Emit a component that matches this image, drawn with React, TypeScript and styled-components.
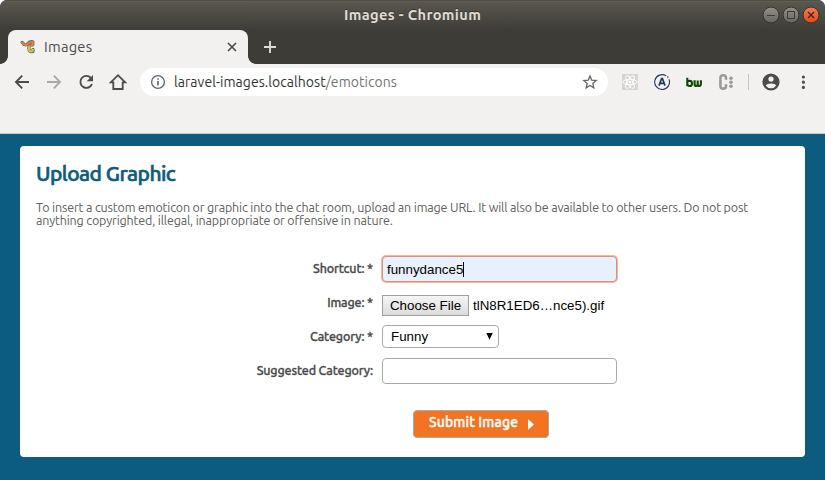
import React from "react";
import styled, { createGlobalStyle, css } from "styled-components";

const Global = createGlobalStyle`
  * { box-sizing: border-box; }
  html, body { margin: 0; padding: 0; background: #fff; overflow: hidden; }
  button, input { margin: 0; font: inherit; }
`;

const ui = `"Ubuntu", "Noto Sans", "Open Sans", sans-serif`;
const arial = `"Liberation Sans", Arial, sans-serif`;

const Window = styled.div`
  width: 825px;
  height: 480px;
  display: flex;
  flex-direction: column;
  overflow: hidden;
  border-radius: 7px 7px 0 0;
  background: #0c5c80;
  font-family: ${ui};
`;

const TitleBar = styled.header`
  flex: none;
  height: 30px;
  display: grid;
  grid-template-columns: 1fr auto 1fr;
  align-items: center;
  padding-right: 5px;
  background: linear-gradient(#504e45 0, #504e45 1px, #66645a 1px, #59574d 2px, #3f3e39 29px, #3d3c37 30px);
`;

const WindowTitle = styled.h1`
  grid-column: 2;
  margin: 0 0 0 5px;
  width: 137px;
  white-space: nowrap;
  font-size: 14.67px;
  line-height: 30px;
  font-weight: 700;
  letter-spacing: 0.34px;
  color: #dfdbd2;
  text-shadow: 0 -1px 0 #36352f;
`;

const WindowControls = styled.div`
  justify-self: end;
  display: flex;
  gap: 2px;
`;

const TabStrip = styled.div`
  flex: none;
  height: 34px;
  display: flex;
  padding-left: 8px;
  background: #3d3c37;
  position: relative;
`;

const Tab = styled.div`
  width: 240px;
  height: 34px;
  display: flex;
  align-items: center;
  padding: 0 9px 0 12px;
  border-radius: 8px 8px 0 0;
  background: #f2f1f0;
  color: #4c4c4c;
`;

const TabFoot = styled.i<{ $side: "left" | "right" }>`
  position: absolute;
  bottom: 0;
  left: ${(p) => (p.$side === "left" ? 0 : 248)}px;
  width: 8px;
  height: 8px;
  background: radial-gradient(circle at ${(p) => (p.$side === "left" ? "0 0" : "100% 0")}, transparent 7.5px, #f2f1f0 8.2px);
`;

const TabTitle = styled.span`
  flex: 1;
  margin-left: 8px;
  padding-bottom: 2px;
  font-size: 14.67px;
  letter-spacing: 0.25px;
`;

const NewTab = styled.div`
  display: flex;
  align-items: center;
  margin-left: 15px;
`;

const Toolbar = styled.nav`
  flex: none;
  height: 36px;
  display: flex;
  align-items: center;
  padding-left: 12px;
  background: #f2f1f0;
`;

const NavIcons = styled.div`
  display: flex;
  gap: 12px;
`;

const Address = styled.div`
  width: 468px;
  height: 28px;
  display: flex;
  align-items: center;
  margin: 0 14px 0 12px;
  padding: 0 8px;
  border-radius: 14px;
  background: #fff;
`;

const Url = styled.span`
  flex: 1;
  margin-left: 6px;
  font-size: 14px;
  line-height: 28px;
  letter-spacing: 0.05px;
  color: #333;
  white-space: nowrap;
  span { color: #757575; }
`;

const Extensions = styled.div`
  display: flex;
  align-items: center;
  gap: 12px;
`;

const ExtensionList = styled.div`
  display: flex;
  gap: 16px;
`;

const Divider = styled.i`
  width: 1px;
  height: 16px;
  margin-left: 2px;
  background: #c8c7c6;
`;

const BookmarkBar = styled.div`
  flex: none;
  height: 34px;
  background: #f2f1f0;
  border-bottom: 1px solid #c9c8c7;
`;

const Page = styled.main`
  flex: 1;
  padding: 12px 20px 23px;
  background: #0c5c80;
`;

const Card = styled.section`
  height: 311px;
  padding: 14px 16px 0;
  border-radius: 4px;
  background: #fff;
`;

const Heading = styled.h2`
  margin: 0;
  font-size: 21px;
  line-height: 27px;
  font-weight: 500;
  -webkit-text-stroke: 0.6px #0c5c80;
  letter-spacing: -0.55px;
  color: #0c5c80;
  white-space: nowrap;
`;

const Intro = styled.p`
  margin: 14px 0 0;
  font-size: 12.5px;
  line-height: 13px;
  letter-spacing: -0.16px;
  color: #606060;
  white-space: nowrap;
`;

const Form = styled.form`
  display: grid;
  grid-template-columns: 337px 1fr;
  grid-template-rows: 34px 34px 34px 34px;
  column-gap: 9px;
  margin-top: 25px;
`;

const Label = styled.label`
  justify-self: end;
  align-self: center;
  padding-bottom: 2px;
  font-size: 12.5px;
  line-height: 16px;
  font-weight: 500;
  -webkit-text-stroke: 0.3px #4a4a4a;
  letter-spacing: -0.16px;
  color: #4a4a4a;
  white-space: nowrap;
`;

const Control = styled.div<{ $shift?: number }>`
  display: flex;
  align-items: center;
  padding-top: ${(p) => Math.max(0, p.$shift ?? 0) * 2}px;
  padding-bottom: ${(p) => Math.max(0, -(p.$shift ?? 0)) * 2}px;
`;

const field = css`
  border: 1px solid #aaa;
  border-radius: 4px;
  background: #fff;
  color: #000;
  font: 13.33px/16px ${arial};
`;

const TextField = styled.div<{ $focused?: boolean }>`
  ${field}
  width: 235px;
  height: 26px;
  display: flex;
  align-items: center;
  padding: 1px 4px 0;
  ${(p) =>
    p.$focused &&
    css`
      border-color: #d9917a;
      background: #e8f0fe;
      box-shadow: 0 0 0 1px #f4b8a0;
    `}
`;

const Caret = styled.i`
  width: 1px;
  height: 15px;
  background: #000;
`;

const FileButton = styled.button`
  width: 87px;
  height: 21px;
  padding: 0;
  border: 1px solid #a0a0a0;
  border-radius: 0;
  background: linear-gradient(#f5f5f5, #dcdcdc);
  color: #000;
  font: 13.33px/17px ${arial};
`;

const FileName = styled.span`
  margin-left: 4px;
  padding-top: 2px;
  font: 13.33px/16px ${arial};
  color: #000;
`;

const Select = styled.div`
  ${field}
  width: 117px;
  height: 23px;
  display: flex;
  align-items: center;
  justify-content: space-between;
  padding: 1px 5px 0 8px;
`;

const Submit = styled.button`
  width: 136px;
  height: 28px;
  display: flex;
  align-items: center;
  margin: 22px 0 0 377px;
  padding: 0 0 4px 15px;
  border: 1px solid #aaa;
  border-radius: 4px;
  background: #f47321;
  color: #fff;
  font: 500 14px/20px ${ui};
  -webkit-text-stroke: 0.4px #fff;
  letter-spacing: 0.1px;
  white-space: nowrap;
  svg { margin: 5px 0 0 auto; }
`;

const WindowButton = ({ kind }: { kind: "min" | "max" | "close" }) => (
  <svg width="18" height="18" viewBox="0 0 18 18">
    <defs>
      <linearGradient id={`g-${kind}`} x2="0" y2="1">
        <stop stopColor={kind === "close" ? "#f37c55" : "#92908a"} />
        <stop offset="1" stopColor={kind === "close" ? "#df4c1b" : "#66655f"} />
      </linearGradient>
    </defs>
    <circle cx="9" cy="9" r="8" fill={`url(#g-${kind})`} stroke="#34332f" />
    {kind === "min" && <path d="M5 9.5h8" stroke="#3c3b37" />}
    {kind === "max" && <path d="M5.5 5.5h7v7h-7z" fill="none" stroke="#3c3b37" />}
    {kind === "close" && <path d="m6 6 6 6m0-6-6 6" stroke="#4a2010" strokeWidth="1.3" />}
  </svg>
);

const Favicon = () => (
  <svg width="16" height="16" viewBox="0 0 16 16" fill="none" strokeLinecap="round" strokeLinejoin="round">
    <path d="M2.2 3.4 4.2 5.6Q6.6 6.6 8.2 4.2Q10 2 12.8 2.8V5.8M12.8 5.8Q9 5.4 8.8 9Q9 13.6 13 12.4V10.4" stroke="#3d7f94" strokeWidth="3.3" />
    <path d="M2.2 3.6 4.2 5.4Q6.8 6.6 8.4 4.4Q10 2.6 12.8 3V6Q10 5.8 9 8" stroke="#f37a27" strokeWidth="2.1" />
    <path d="M9 8Q8.4 12.6 11.4 12.4Q13 12.2 13 10.8" stroke="#f7b629" strokeWidth="2.1" />
  </svg>
);

const Icon = ({ children, color = "#4c4c4c", size = 20 }: { children: React.ReactNode; color?: string; size?: number }) => (
  <svg width={size} height={size} viewBox={`0 0 ${size} ${size}`} fill="none" stroke={color} strokeWidth="1.9">
    {children}
  </svg>
);

const ReactBadge = () => (
  <svg width="16" height="16" viewBox="0 0 16 16" fill="none" stroke="#fff" strokeWidth=".9">
    <path d="M0 0h16v16H0z" fill="#d5d5d4" stroke="none" />
    <ellipse cx="8" cy="8" rx="7" ry="2.7" />
    <ellipse cx="8" cy="8" rx="7" ry="2.7" transform="rotate(60 8 8)" />
    <ellipse cx="8" cy="8" rx="7" ry="2.7" transform="rotate(120 8 8)" />
    <circle cx="8" cy="8" r="1.3" fill="#fff" stroke="none" />
  </svg>
);

const Apollo = () => (
  <svg width="16" height="16" viewBox="0 0 16 16" fill="none" stroke="#21385e">
    <path d="M15 5.4A7.4 7.4 0 1 1 12.2 1.9" strokeWidth="1.1" />
    <circle cx="13.8" cy="3" r=".8" fill="#21385e" stroke="none" />
    <path d="m5 11.6 2.6-7.1h.8l2.6 7.1M6.2 9.4h3.2" strokeWidth="1.7" />
  </svg>
);

const Wordmark = () => (
  <svg width="16" height="16" viewBox="0 0 16 16" fill="none" stroke="#0a4a08" strokeWidth="2.1">
    <path d="M1.3 3.8v8.4M1.3 8.3Q2 6.8 3.8 6.8Q6 7 6 9.4Q6 12 3.6 12Q1.3 12 1.3 9.2" />
    <path d="M8.6 6.2v3.7q0 2.1 1.5 2.1t1.6-2V6.6M11.7 9.9q0 2.1 1.5 2.1t1.7-2.1V6.2" />
  </svg>
);

const Clockwork = () => (
  <svg width="16" height="16" viewBox="0 0 16 16" fill="none" stroke="#999">
    <path d="M8 5.8V4Q8 1.3 5.2 1.3T2.4 4v8q0 2.7 2.8 2.7T8 12v-1.8" strokeWidth="2.5" />
    <g fill="#999" stroke="none">
      <circle cx="13" cy="4.2" r="1.8" />
      <circle cx="13" cy="8.2" r="1.8" />
      <circle cx="13" cy="12.2" r="1.8" />
    </g>
  </svg>
);

export default function App() {
  return (
    <Window>
      <Global />
      <TitleBar>
        <WindowTitle>Images - Chromium</WindowTitle>
        <WindowControls>
          <WindowButton kind="min" />
          <WindowButton kind="max" />
          <WindowButton kind="close" />
        </WindowControls>
      </TitleBar>
      <TabStrip>
        <TabFoot $side="left" />
        <Tab>
          <Favicon />
          <TabTitle>Images</TabTitle>
          <Icon size={14}><path d="m3 3 8 8m0-8-8 8" strokeWidth="1.7" /></Icon>
        </Tab>
        <TabFoot $side="right" />
        <NewTab><Icon size={14} color="#dfdbd2"><path d="M7 1v12M1 7h12" /></Icon></NewTab>
      </TabStrip>
      <Toolbar>
        <NavIcons>
          <Icon><path d="M17 10H4.3M10.2 3.7 4 10l6.2 6.3" /></Icon>
          <Icon color="#aaa9a8"><path d="M3 10h12.7M9.8 3.7 16 10l-6.2 6.3" /></Icon>
          <Icon>
            <path d="M14.7 5.7A6 6 0 1 0 16 12" />
            <path d="M17 3v6.3h-6.3z" fill="#4c4c4c" stroke="none" />
          </Icon>
          <Icon><path d="M2.8 10.4h2.5V17h9.4v-6.6h2.5L10 3.2z" strokeWidth="1.8" /></Icon>
        </NavIcons>
        <Address>
          <Icon color="#5f6368">
            <circle cx="10" cy="10" r="6.4" strokeWidth="1.3" />
            <path d="M10 9v4.6M10 6.2v1.6" strokeWidth="1.6" />
          </Icon>
          <Url>laravel-images.localhost<span>/emoticons</span></Url>
          <Icon color="#666">
            <path d="m10 4 1.7 4.1 4.5.4-3.4 2.9 1 4.4-3.8-2.3-3.8 2.3 1-4.4-3.4-2.9 4.5-.4z" strokeWidth="1.3" />
          </Icon>
        </Address>
        <Extensions>
          <ExtensionList>
            <ReactBadge />
            <Apollo />
            <Wordmark />
            <Clockwork />
          </ExtensionList>
          <Divider />
          <Icon>
            <circle cx="10" cy="10" r="8.6" fill="#4c4c4c" stroke="none" />
            <circle cx="10" cy="7.1" r="2.6" fill="#f2f1f0" stroke="none" />
            <path d="M4.8 13.4q1-2 5.2-2t5.2 2Q13.5 16.2 10 16.2t-5.2-2.8z" fill="#f2f1f0" stroke="none" />
          </Icon>
          <Icon>
            <path d="M10.4 5h.01M10.4 10.2h.01M10.4 15.4h.01" strokeWidth="3.2" strokeLinecap="round" />
          </Icon>
        </Extensions>
      </Toolbar>
      <BookmarkBar />
      <Page>
        <Card>
          <Heading>Upload Graphic</Heading>
          <Intro>
            To insert a custom emoticon or graphic into the chat room, upload an image URL. It will also be available to other users. Do not post
            <br />
            anything copyrighted, illegal, inappropriate or offensive in nature.
          </Intro>
          <Form>
            <Label>Shortcut: *</Label>
            <Control><TextField $focused>funnydance5<Caret /></TextField></Control>
            <Label>Image: *</Label>
            <Control $shift={2}>
              <FileButton type="button">Choose File</FileButton>
              <FileName>tlN8R1ED6…nce5).gif</FileName>
            </Control>
            <Label>Category: *</Label>
            <Control $shift={-1}>
              <Select>
                Funny
                <svg width="7" height="7" viewBox="0 0 7 7"><path d="M.3 0h6.4L3.5 6.7z" /></svg>
              </Select>
            </Control>
            <Label>Suggested Category:</Label>
            <Control><TextField /></Control>
          </Form>
          <Submit type="button">
            Submit Image
            <svg width="20" height="11" viewBox="0 0 20 11"><path d="M0 0l6 5.5L0 11z" fill="#fff" /></svg>
          </Submit>
        </Card>
      </Page>
    </Window>
  );
}
